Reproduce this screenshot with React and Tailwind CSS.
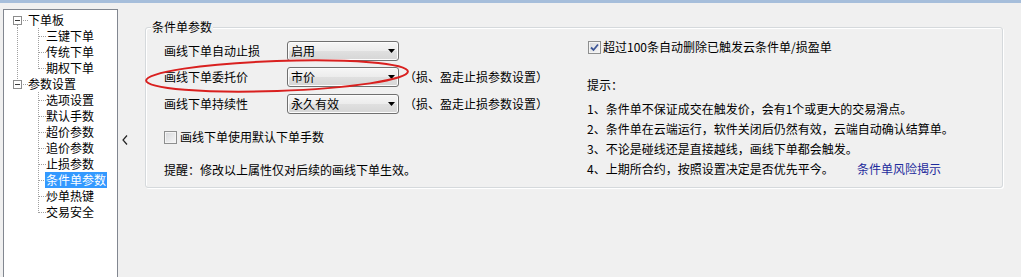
import React from "react";

const tree = [
    { label: "下单板", children: ["三键下单", "传统下单", "期权下单"] },
    {
        label: "参数设置",
        children: ["选项设置", "默认手数", "超价参数", "追价参数", "止损参数", "条件单参数", "炒单热键", "交易安全"],
    },
];

const selected = "条件单参数";

const dot = { stroke: "#a0a0a0", strokeWidth: 1, strokeDasharray: "1 1", shapeRendering: "crispEdges" };

const RootConnector = ({ first, last }) => (
    <svg width="24" height="16" className="shrink-0">
        {!first && <line x1="13.5" y1="0" x2="13.5" y2="4" style={dot} />}
        {!last && <line x1="13.5" y1="13" x2="13.5" y2="16" style={dot} />}
        <line x1="19" y1="8.5" x2="24" y2="8.5" style={dot} />
        <rect x="9.5" y="4.5" width="8" height="8" fill="#fff" stroke="#8c8c8c" shapeRendering="crispEdges" />
        <line x1="11" y1="8.5" x2="16" y2="8.5" stroke="#3a3a3a" shapeRendering="crispEdges" />
    </svg>
);

const ChildConnector = ({ parentLast, last }) => (
    <svg width="42" height="16" className="shrink-0">
        {!parentLast && <line x1="13.5" y1="0" x2="13.5" y2="16" style={dot} />}
        <line x1="34.5" y1="0" x2="34.5" y2={last ? 9 : 16} style={dot} />
        <line x1="35" y1="8.5" x2="42" y2="8.5" style={dot} />
    </svg>
);

const Tree = () => (
    <div className="mt-[6px] ml-[3px] w-[115px] h-[272px] shrink-0 border border-[#828790] bg-white pt-[2px]">
        {tree.map((node, i) => {
            const first = i === 0;
            const last = i === tree.length - 1;
            return (
                <div key={node.label}>
                    <div className="flex h-[16px] items-center">
                        <RootConnector first={first} last={last} />
                        <span className="whitespace-nowrap">{node.label}</span>
                    </div>
                    {node.children.map((c, j) => (
                        <div key={c} className="flex h-[16px] items-center">
                            <ChildConnector parentLast={last} last={j === node.children.length - 1} />
                            <span
                                className={`ml-[-1px] px-[1px] whitespace-nowrap ${
                                    c === selected ? "bg-[#3399ff] text-white" : ""
                                }`}
                            >
                                {c}
                            </span>
                        </div>
                    ))}
                </div>
            );
        })}
    </div>
);

const Select = ({ value }) => (
    <div className="flex h-[20px] w-[112px] shrink-0 items-center justify-between rounded-[3px] border border-[#707070] bg-[linear-gradient(#f6f6f6,#ececec_50%,#e0e0e0_50%,#d6d6d6)] pl-[3px] pr-[3px] shadow-[inset_0_0_0_1px_#fcfcfc]">
        <span className="whitespace-nowrap">{value}</span>
        <svg width="7" height="4" viewBox="0 0 7 4">
            <path d="M0 0h7L3.5 4z" fill="#000" />
        </svg>
    </div>
);

const CheckBox = ({ checked }) => (
    <div className="flex h-[13px] w-[13px] shrink-0 items-center justify-center border border-[#8e8f8f] bg-[linear-gradient(135deg,#d6d8db,#f7f7f7)] shadow-[inset_0_0_0_1px_#f4f4f4]">
        {checked && (
            <svg width="9" height="9" viewBox="0 0 9 9">
                <path d="M1 4.5l2.5 2.5L8 1.5" fill="none" stroke="#3c5596" strokeWidth="1.8" />
            </svg>
        )}
    </div>
);

const FormRow = ({ label, value, note, className }) => (
    <div className={`flex h-[20px] items-center ${className || ""}`}>
        <span className="w-[123px] shrink-0 whitespace-nowrap">{label}</span>
        <Select value={value} />
        {note && <span className="ml-[5px] whitespace-nowrap">{note}</span>}
    </div>
);

const tips = [
    "1、条件单不保证成交在触发价，会有1个或更大的交易滑点。",
    "2、条件单在云端运行，软件关闭后仍然有效，云端自动确认结算单。",
    "3、不论是碰线还是直接越线，画线下单都会触发。",
];

const App = () => {
    return (
        <div className="relative h-[277px] w-[1021px] overflow-hidden bg-[#f0f0f0] text-[12px] leading-[16px] text-black font-['Noto_Sans_CJK_SC',sans-serif]">
            <div className="h-[3px] bg-[#a6bedb]" />
            <div className="flex items-start">
                <Tree />
                <div className="flex h-[274px] w-[27px] shrink-0 items-center pl-[4px]">
                    <svg width="6" height="10" viewBox="0 0 6 10">
                        <path d="M5 0.5L1 5l4 4.5" fill="none" stroke="#222" strokeWidth="1.2" />
                    </svg>
                </div>
                <div className="relative mt-[24px] h-[161px] w-[858px] shrink-0 rounded-[3px] border border-[#d5d9dc] shadow-[1px_1px_0_#fff,inset_1px_1px_0_#fff]">
                    <span className="absolute left-[5px] top-[-9px] bg-[#f0f0f0] px-[1px] whitespace-nowrap">条件单参数</span>
                    <div className="flex pl-[18px] pt-[11px]">
                        <div className="w-[423px] shrink-0 pt-[2px]">
                            <FormRow label="画线下单自动止损" value="启用" />
                            <FormRow
                                label="画线下单委托价"
                                value="市价"
                                note="（损、盈走止损参数设置）"
                                className="mt-[6px]"
                            />
                            <FormRow
                                label="画线下单持续性"
                                value="永久有效"
                                note="（损、盈走止损参数设置）"
                                className="mt-[7px]"
                            />
                            <div className="mt-[15px] flex h-[16px] items-center">
                                <CheckBox />
                                <span className="ml-[3px] whitespace-nowrap">画线下单使用默认下单手数</span>
                            </div>
                            <div className="mt-[17px] h-[16px] whitespace-nowrap">
                                提醒：修改以上属性仅对后续的画线下单生效。
                            </div>
                        </div>
                        <div className="flex-1">
                            <div className="flex h-[16px] items-center pl-[1px]">
                                <CheckBox checked />
                                <span className="ml-[2px] whitespace-nowrap">超过100条自动删除已触发云条件单/损盈单</span>
                            </div>
                            <div className="mt-[22px] h-[16px]">提示：</div>
                            <div className="mt-[6px]">
                                {tips.map((t) => (
                                    <div key={t} className="h-[20px] leading-[20px] whitespace-nowrap">
                                        {t}
                                    </div>
                                ))}
                                <div className="flex h-[20px] leading-[20px] whitespace-nowrap">
                                    <span className="w-[270px] shrink-0">4、上期所合约，按照设置决定是否优先平今。</span>
                                    <span className="text-[#1e2b9c]">条件单风险揭示</span>
                                </div>
                            </div>
                        </div>
                    </div>
                </div>
            </div>
            <svg className="pointer-events-none absolute left-[140px] top-[55px]" width="275" height="45">
                <ellipse
                    cx="137"
                    cy="21"
                    rx="131"
                    ry="15"
                    fill="none"
                    stroke="#d9201f"
                    strokeWidth="2"
                    transform="rotate(-2 137 21)"
                />
            </svg>
        </div>
    );
};

export default App;
